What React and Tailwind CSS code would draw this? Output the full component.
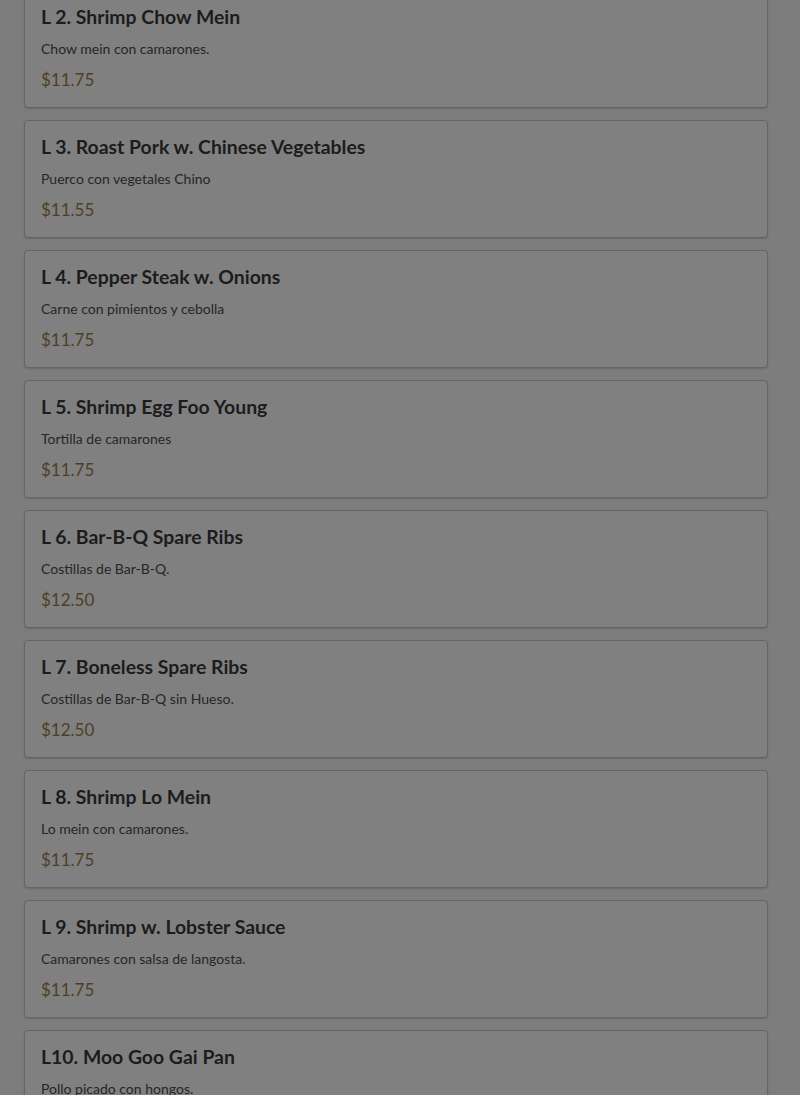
import React from "react";

const items = [
  ["L 2. Shrimp Chow Mein", "Chow mein con camarones.", "$11.75"],
  ["L 3. Roast Pork w. Chinese Vegetables", "Puerco con vegetales Chino", "$11.55"],
  ["L 4. Pepper Steak w. Onions", "Carne con pimientos y cebolla", "$11.75"],
  ["L 5. Shrimp Egg Foo Young", "Tortilla de camarones", "$11.75"],
  ["L 6. Bar-B-Q Spare Ribs", "Costillas de Bar-B-Q.", "$12.50"],
  ["L 7. Boneless Spare Ribs", "Costillas de Bar-B-Q sin Hueso.", "$12.50"],
  ["L 8. Shrimp Lo Mein", "Lo mein con camarones.", "$11.75"],
  ["L 9. Shrimp w. Lobster Sauce", "Camarones con salsa de langosta.", "$11.75"],
  ["L10. Moo Goo Gai Pan", "Pollo picado con hongos.", "$11.75"],
];

export default function App() {
  return (
    <div
      className="w-[800px] h-[1095px] overflow-hidden bg-[#7d7d7d]"
      style={{ fontFamily: "Lato, 'Noto Sans', sans-serif" }}
    >
      <div className="mt-[-10px] flex flex-col gap-3 pl-6 pr-8">
        {items.map(([t, d, p]) => (
          <div
            key={t}
            className="rounded-[4px] border border-[#656565] bg-[#808080] px-4 pt-3 pb-[15px] shadow-[0_1px_2px_rgba(0,0,0,0.15)]"
          >
            <div className="text-[19.4px] leading-[28px] font-bold text-[#1c1c1c]">{t}</div>
            <div className="mt-2 text-[14px] leading-[20px] text-[#262626]">{d}</div>
            <div className="mt-[9px] text-[17px] leading-[24px] text-[#4d3f27]">{p}</div>
          </div>
        ))}
      </div>
    </div>
  );
}
